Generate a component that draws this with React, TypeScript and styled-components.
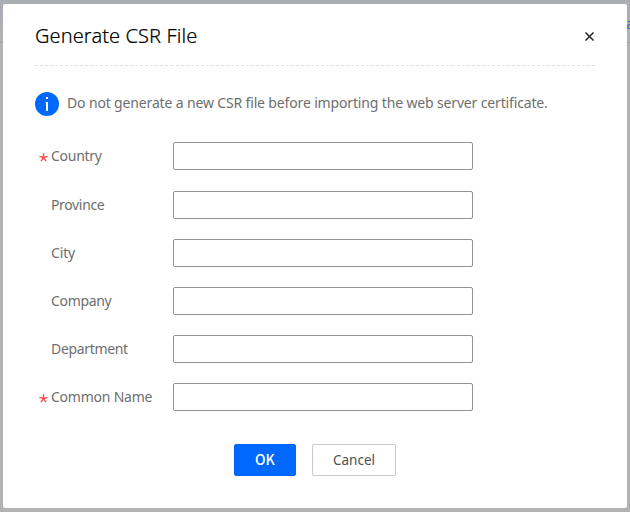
import React from "react";
import styled, { createGlobalStyle } from "styled-components";

const GlobalStyle = createGlobalStyle`
  * { box-sizing: border-box; }
  body { margin: 0; overflow: hidden; }
`;

const Page = styled.div`
  position: relative;
  height: 512px;
  overflow: hidden;
  background: #b3b3b3;
  font-family: "Noto Sans", "Open Sans", sans-serif;
  color: #6e6e6e;
`;

const PageHeader = styled.div`
  height: 43px;
  background: linear-gradient(#aaadb4 0, #aaadb4 12px, #b1b2b4 32px);
  border-bottom: 1px solid #a2a2a2;
  padding: 14px 0 0 626px;
  font-size: 14px;
  line-height: 20px;
  color: #3066b5;
  white-space: nowrap;
`;

const Dialog = styled.section`
  position: absolute;
  inset: 4px 3px 4px 3px;
  padding: 0 32px;
  display: flex;
  flex-direction: column;
  background: #fff;
  border-radius: 2px;
`;

const DialogHeader = styled.header`
  height: 62px;
  flex: none;
  display: flex;
  justify-content: space-between;
  background: repeating-linear-gradient(90deg, #dfdfdf 0 3px, transparent 3px 5.018px) bottom / 100% 1px no-repeat;
`;

const Title = styled.h1`
  margin: 18px 0 0;
  font-size: 20px;
  line-height: 28px;
  font-weight: 300;
  letter-spacing: 0.09px;
  color: #000;
  -webkit-text-stroke: 0.2px #000;
`;

const CloseButton = styled.button`
  width: 11px;
  height: 11px;
  margin-top: 27px;
  padding: 0;
  border: 0;
  background: none;
  svg { display: block; }
`;

const Notice = styled.div`
  display: flex;
  align-items: center;
  gap: 8px;
  height: 24px;
  margin: 26px 0 26px;
  svg { flex: none; }
`;

const NoticeText = styled.p`
  margin: -2px 0 0;
  font-size: 14px;
  line-height: 20px;
  letter-spacing: -0.15px;
  white-space: nowrap;
`;

const Form = styled.form`
  display: flex;
  flex-direction: column;
  gap: 20px;
`;

const Row = styled.label<{ $first?: boolean }>`
  display: grid;
  grid-template-columns: 16px 122px 300px;
  align-items: center;
  height: 28px;
  margin-bottom: ${(p) => (p.$first ? 1 : 0)}px;
`;

const Required = styled.span`
  display: flex;
  padding: 2px 0 0 4px;
`;

const Label = styled.span<{ $spacing: number }>`
  font-size: 14px;
  line-height: 20px;
  letter-spacing: ${(p) => p.$spacing}px;
  white-space: nowrap;
`;

const Input = styled.input`
  width: 300px;
  height: 28px;
  padding: 0 8px;
  border: 1px solid #929292;
  border-radius: 2px;
  background: #fff;
  outline: none;
`;

const Actions = styled.footer`
  display: flex;
  gap: 16px;
  margin: 33px 0 0 199px;
`;

const Button = styled.button<{ $primary?: boolean }>`
  width: ${(p) => (p.$primary ? 62 : 84)}px;
  height: 32px;
  padding: 0 0 ${(p) => (p.$primary ? 2 : 1)}px;
  border: 1px solid ${(p) => (p.$primary ? "#0067ff" : "#c9c9c9")};
  border-radius: 2px;
  background: ${(p) => (p.$primary ? "#0067ff" : "#fff")};
  color: ${(p) => (p.$primary ? "#fff" : "#505050")};
  font-family: ${(p) => (p.$primary ? '"Noto Sans CJK SC"' : '"Noto Sans"')}, sans-serif;
  font-size: ${(p) => (p.$primary ? 14 : 13.5)}px;
  line-height: 20px;
  font-weight: ${(p) => (p.$primary ? 500 : 400)};
`;

const fields = [
  { name: "Country", required: true, spacing: -0.28 },
  { name: "Province", required: false, spacing: -0.35 },
  { name: "City", required: false, spacing: -0.15 },
  { name: "Company", required: false, spacing: -0.34 },
  { name: "Department", required: false, spacing: -0.34 },
  { name: "Common Name", required: true, spacing: -0.23 },
];

const InfoIcon = () => (
  <svg width="24" height="24" viewBox="0 0 24 24">
    <circle cx="12" cy="12" r="12" fill="#0067ff" />
    <path d="M11 5h2v2h-2zM10.5 10H13v9h-2v-8h-.5z" fill="#fff" />
  </svg>
);

const CloseIcon = () => (
  <svg width="11" height="11" viewBox="0 0 11 11">
    <path d="M1.5 1.5l8 8M9.5 1.5l-8 8" stroke="#222" strokeWidth="1.5" />
  </svg>
);

const Asterisk = () => (
  <svg width="9" height="9" viewBox="0 0 9 9">
    <path d="M4.5 4.5V.2M4.5 4.5L.4 3.3M4.5 4.5l4.1-1.2M4.5 4.5L2 8.2M4.5 4.5L7 8.2" stroke="#ff5050" strokeWidth="1.4" />
  </svg>
);

export default function App() {
  return (
    <>
      <GlobalStyle />
      <Page>
        <PageHeader>a</PageHeader>
        <Dialog role="dialog" aria-label="Generate CSR File">
          <DialogHeader>
            <Title>Generate CSR File</Title>
            <CloseButton aria-label="Close"><CloseIcon /></CloseButton>
          </DialogHeader>
          <Notice>
            <InfoIcon />
            <NoticeText>Do not generate a new CSR file before importing the web server certificate.</NoticeText>
          </Notice>
          <Form>
            {fields.map((f, i) => (
              <Row key={f.name} $first={i === 0}>
                <Required>{f.required && <Asterisk />}</Required>
                <Label $spacing={f.spacing}>{f.name}</Label>
                <Input />
              </Row>
            ))}
          </Form>
          <Actions>
            <Button $primary>OK</Button>
            <Button>Cancel</Button>
          </Actions>
        </Dialog>
      </Page>
    </>
  );
}
